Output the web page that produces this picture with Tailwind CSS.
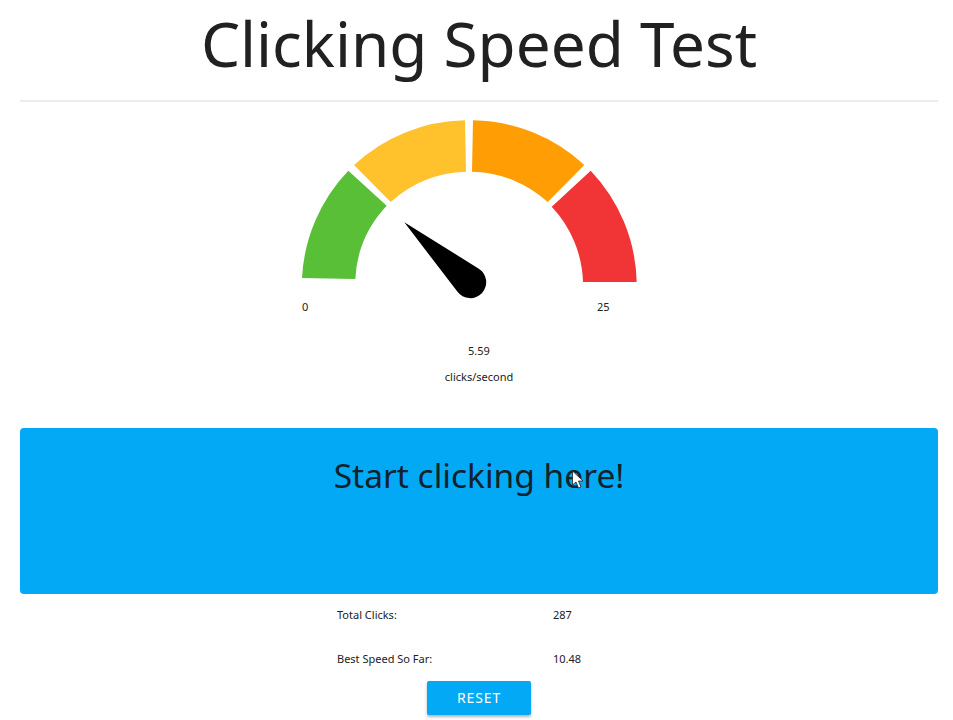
<!DOCTYPE html>
<html lang="en">
<head>
<meta charset="utf-8">
<title>Clicking Speed Test</title>
<script src="https://cdn.jsdelivr.net/npm/@tailwindcss/browser@4"></script>
</head>
<body class="bg-white overflow-hidden font-['Noto_Sans',sans-serif] text-[#212121]">
<main class="relative h-[720px] w-[953px] overflow-hidden pl-5 pr-[15px]">
  <h1 class="h-[102px] border-b-2 border-[#ececec] text-center text-[62px] leading-[86px] font-normal">Clicking Speed Test</h1>
  <div class="flex h-[326px] flex-col items-center">
    <svg class="mt-[17px] shrink-0" width="376" height="190" viewBox="291 119 376 190" aria-hidden="true">
      <path fill="#58bf37" d="M302 278 A167.5 167.5 0 0 1 348.3 170.7 L386.7 205.7 A115 115 0 0 0 355.3 279 Z"/>
      <path fill="#ffc12c" d="M354 165 A167.5 167.5 0 0 1 465 120.3 L466 171.7 A115 115 0 0 0 390.7 202 Z"/>
      <path fill="#ff9d04" d="M473 120.3 A167.5 167.5 0 0 1 584.3 165 L547.7 202 A115 115 0 0 0 472 171.7 Z"/>
      <path fill="#f13537" d="M590.7 170.7 A167.5 167.5 0 0 1 636.7 282 L583 282 A115 115 0 0 0 551.7 206.7 Z"/>
      <path fill="#000" d="M404.3 222.3 L478.4 268.4 A16 16 0 1 1 457.3 291.6 Z"/>
    </svg>
  </div>
  <div class="absolute top-[299px] left-[302px] text-[11px] leading-4">0</div>
  <div class="absolute top-[299px] left-[597px] text-[11px] leading-4">25</div>
  <div class="absolute top-[343px] left-5 w-[918px] text-center text-[11px] leading-4">5.59</div>
  <div class="absolute top-[369px] left-5 w-[918px] text-center text-[11px] leading-4">clicks/second</div>
  <div role="button" class="h-[166px] w-full rounded bg-[#03a9f4] pt-[24px] text-center text-[33.5px] leading-[46px] text-[#10222c]">Start clicking here!</div>
  <dl class="ml-[317px] grid w-[300px] grid-cols-[216px_1fr] text-[11px] leading-4">
    <dt class="pt-[13px] pb-[14px]">Total Clicks:</dt><dd class="pt-[13px] pb-[14px]">287</dd>
    <dt class="pt-[14px] pb-[14px]">Best Speed So Far:</dt><dd class="pt-[14px] pb-[14px]">10.48</dd>
  </dl>
  <div class="flex justify-center">
    <button class="h-[34px] w-[104px] rounded-[2px] bg-[#03a9f4] text-sm tracking-[0.9px] text-white shadow-[0_2px_3px_rgba(0,0,0,0.3)]">RESET</button>
  </div>
  <svg class="absolute top-[470px] left-[571px]" width="14" height="20" viewBox="0 0 14 20" aria-hidden="true">
    <path fill="#fff" stroke="#222" stroke-width="0.8" d="M1.5 1 L1.5 15 L5 12 L7.5 18 L10 17 L7.5 11 L12 11 Z"/>
  </svg>
</main>
</body>
</html>
